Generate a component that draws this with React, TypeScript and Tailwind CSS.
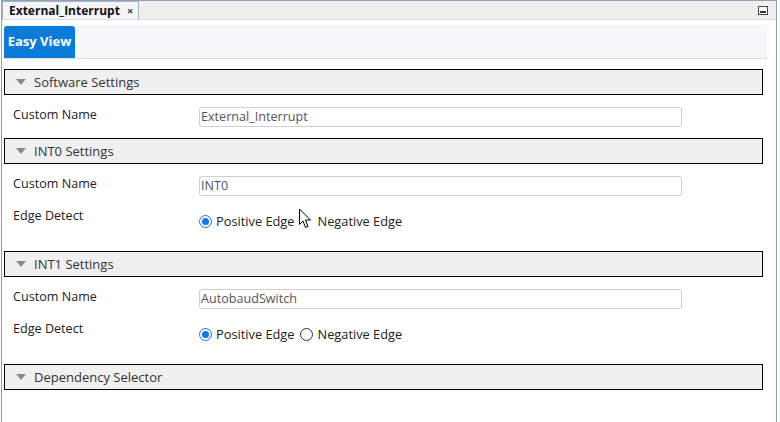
import { useState } from "react";

const font = "font-['Segoe_UI','Open_Sans','Noto_Sans',sans-serif]";

function Caret() {
  return (
    <svg width="10" height="6" viewBox="0 0 10 6" className="shrink-0">
      <path d="M0 0 L10 0 L5 6 Z" fill="#8a8a8a" />
    </svg>
  );
}

function SectionHeader({ title }: { title: string }) {
  return (
    <div className="ml-[2px] flex h-[26px] w-[759px] items-center gap-[8px] border border-black bg-[#f0f0f0] pl-[11px] text-[13px] text-[#333]">
      <Caret />
      <span className="leading-none">{title}</span>
    </div>
  );
}

function TextRow({ label, value }: { label: string; value: string }) {
  return (
    <div className="flex items-start">
      <span className="w-[197px] pl-[11px] text-[12.6px] leading-[16px] text-[#222]">
        {label}
      </span>
      <div className="flex h-[20px] w-[483px] items-center rounded-[3px] border border-[#cfcfcf] bg-white px-[1px] text-[12.6px] text-[#555]">
        {value}
      </div>
    </div>
  );
}

function Radio({ checked, hidden }: { checked: boolean; hidden?: boolean }) {
  return (
    <span
      className={`flex h-[13px] w-[13px] shrink-0 items-center justify-center rounded-full border bg-white ${
        checked ? "border-[#1a73e8]" : "border-[#333]"
      } ${hidden ? "invisible" : ""}`}
    >
      {checked && <span className="h-[7px] w-[7px] rounded-full bg-[#1a73e8]" />}
    </span>
  );
}

function EdgeRow({ cursor }: { cursor?: boolean }) {
  const [pos, setPos] = useState(true);
  return (
    <div className="flex items-start">
      <span className="w-[197px] pl-[11px] text-[12.6px] leading-[16px] text-[#222]">Edge Detect</span>
      <div className="relative mt-[5px] flex items-center text-[12.8px] leading-[16px] text-[#222]">
        <button className="flex items-center gap-[4px]" onClick={() => setPos(true)}>
          <Radio checked={pos} />
          <span>Positive Edge</span>
        </button>
        <button className="ml-[5px] flex items-center gap-[5px]" onClick={() => setPos(false)}>
          <Radio checked={!pos} hidden={cursor} />
          <span>Negative Edge</span>
        </button>
        {cursor && (
          <svg width="15" height="21" viewBox="0 0 15 21" className="absolute left-[99px] top-[-5px]">
            <path d="M1.5 1 L1.5 16.5 L5 13 L7.5 19.5 L10 18.5 L7.5 12 L12.5 12 Z" fill="white" stroke="black" strokeWidth="1" strokeLinejoin="round" />
          </svg>
        )}
      </div>
    </div>
  );
}

export default function App() {
  return (
    <div className={`h-[422px] w-[780px] overflow-hidden bg-white ${font}`}>
      <div className="ml-[1px] flex h-[422px] w-[776px] flex-col border-x border-t border-[#8da2b8]">
        <div className="flex h-[19px] shrink-0 items-end justify-between border-b border-[#d8dde3] bg-[#efefef]">
          <div className="flex h-[18px] items-center gap-[7px] border border-b-0 border-[#a9b3bf] bg-[#f3f5f7] pl-[6px] pr-[5px]">
            <span className="text-[12px] font-bold leading-none text-[#111]">External_Interrupt</span>
            <span className="text-[11px] font-bold leading-none text-[#333]">×</span>
          </div>
          <div className="mb-[4px] mr-[8px] flex h-[9px] w-[10px] items-end border border-[#444] bg-white p-[1px]">
            <div className="h-[2px] w-full bg-[#333]" />
          </div>
        </div>
        <div className="flex flex-1 flex-col">
          <div className="ml-[1px] mt-[5px] flex h-[34px] w-[764px] items-end border-b border-[#dcdfe3] bg-[#f6f7f9] pl-[1px]">
            <div className="flex h-[32px] w-[71px] items-center justify-center rounded-t-[3px] border-b border-[#0a7bd8] bg-[#0a7bd8] text-[13px] font-bold text-white">
              Easy View
            </div>
          </div>
          <div className="mt-[10px] flex flex-col">
            <SectionHeader title="Software Settings" />
            <div className="pb-[11px] pt-[12px]">
              <TextRow label="Custom Name" value="External_Interrupt" />
            </div>
            <SectionHeader title="INT0 Settings" />
            <div className="flex flex-col gap-[12px] pb-[22px] pt-[12px]">
              <TextRow label="Custom Name" value="INT0" />
              <EdgeRow cursor />
            </div>
            <SectionHeader title="INT1 Settings" />
            <div className="flex flex-col gap-[12px] pb-[22px] pt-[12px]">
              <TextRow label="Custom Name" value="AutobaudSwitch" />
              <EdgeRow />
            </div>
            <SectionHeader title="Dependency Selector" />
          </div>
        </div>
      </div>
    </div>
  );
}
